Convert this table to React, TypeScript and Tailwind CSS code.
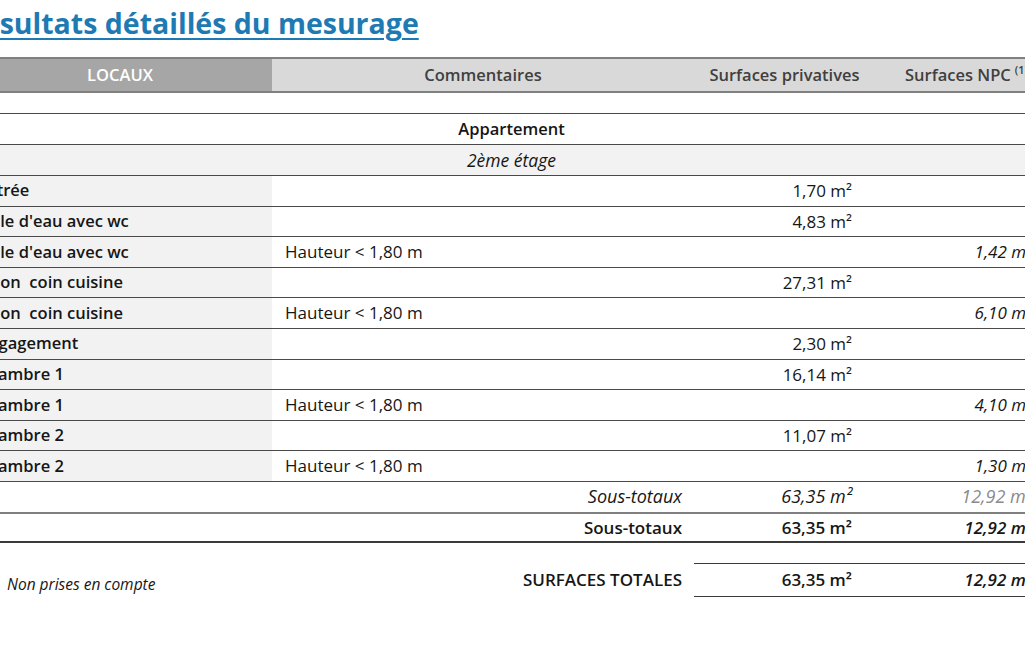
import React from "react";

interface RoomRow {
  name: string;
  comment?: string;
  privative?: string;
  npc?: string;
}

const rooms: RoomRow[] = [
  { name: "Entrée", privative: "1,70 m²" },
  { name: "Salle d'eau avec wc", privative: "4,83 m²" },
  { name: "Salle d'eau avec wc", comment: "Hauteur < 1,80 m", npc: "1,42 m²" },
  { name: "Salon  coin cuisine", privative: "27,31 m²" },
  { name: "Salon  coin cuisine", comment: "Hauteur < 1,80 m", npc: "6,10 m²" },
  { name: "Dégagement", privative: "2,30 m²" },
  { name: "Chambre 1", privative: "16,14 m²" },
  { name: "Chambre 1", comment: "Hauteur < 1,80 m", npc: "4,10 m²" },
  { name: "Chambre 2", privative: "11,07 m²" },
  { name: "Chambre 2", comment: "Hauteur < 1,80 m", npc: "1,30 m²" },
];

const cols = "grid grid-cols-[304px_422px_181px_180px]";

const App: React.FC = () => {
  return (
    <div
      className="w-[1025px] h-[650px] overflow-hidden bg-white text-[#161616]"
      style={{ fontFamily: "'Open Sans', 'Noto Sans', sans-serif" }}
    >
      <div className="-ml-[32px] w-[1087px]">
        {/* title */}
        <div className="h-[57px] pt-[5px]">
          <h1 className="-ml-[4px] text-[28.5px] font-bold text-[#1e7ab3] underline decoration-2 underline-offset-[4px] leading-[36px] whitespace-nowrap">
            Résultats détaillés du mesurage
          </h1>
        </div>

        {/* header */}
        <div className={`${cols} h-[36px] border-y-2 border-[#808080] text-[16.5px] font-semibold`}>
          <div className="bg-[#a6a6a6] text-white flex items-center justify-center">LOCAUX</div>
          <div className="bg-[#d9d9d9] text-[#404040] flex items-center justify-center">Commentaires</div>
          <div className="bg-[#d9d9d9] text-[#404040] flex items-center justify-center">Surfaces privatives</div>
          <div className="bg-[#d9d9d9] text-[#404040] flex items-center pl-[30px] whitespace-nowrap">
            Surfaces NPC <sup className="text-[11px] ml-1">(1)</sup>
          </div>
        </div>

        <div className="h-[20px]" />

        <div className="border-t-[1.5px] border-[#4a4a4a] h-[31px] flex items-center justify-center text-[16.5px] font-semibold">
          Appartement
        </div>
        <div className="border-t-[1.5px] border-[#4a4a4a] h-[31px] flex items-center justify-center text-[17.5px] italic bg-[#f2f2f2]">
          2ème étage
        </div>

        {rooms.map((r, i) => (
          <div key={i} className={`${cols} border-t-[1.5px] border-[#4a4a4a] h-[30.6px] text-[17px]`}>
            <div className="bg-[#f2f2f2] font-semibold text-[16.5px] flex items-center pl-[9px] whitespace-pre">{r.name}</div>
            <div className="flex items-center pl-[13px]">{r.comment}</div>
            <div className="flex items-center justify-end pr-[23px]">{r.privative}</div>
            <div className="flex items-center justify-end pr-[23px] italic whitespace-nowrap">{r.npc}</div>
          </div>
        ))}

        <div className={`${cols} border-t-[1.5px] border-[#4a4a4a] h-[31px] text-[18px] italic`}>
          <div />
          <div className="flex items-center justify-end pr-[12px]">Sous-totaux</div>
          <div className="flex items-center justify-end pr-[23px]">63,35 m²</div>
          <div className="flex items-center justify-end pr-[23px] text-[#8a8a8a] whitespace-nowrap">12,92 m²</div>
        </div>
        <div className={`${cols} border-y-2 border-t-[#808080] border-b-[#3a3a3a] h-[31px] text-[17px] font-semibold`}>
          <div />
          <div className="flex items-center justify-end pr-[12px]">Sous-totaux</div>
          <div className="flex items-center justify-end pr-[23px]">63,35 m²</div>
          <div className="flex items-center justify-end pr-[23px] italic whitespace-nowrap">12,92 m²</div>
        </div>

        {/* totals */}
        <div className={`${cols} mt-[20px] text-[17px]`}>
          <div className="flex items-center pl-[39px] pt-[10px] text-[15.5px] italic">Non prises en compte</div>
          <div className="flex items-center justify-end pr-[12px] font-semibold">SURFACES TOTALES</div>
          <div className="col-span-2 grid grid-cols-[181px_180px] border-y-[1.5px] border-[#3a3a3a] h-[34px] font-semibold">
            <div className="flex items-center justify-end pr-[23px]">63,35 m²</div>
            <div className="flex items-center justify-end pr-[23px] italic whitespace-nowrap">12,92 m²</div>
          </div>
        </div>
      </div>
    </div>
  );
};

export default App;
